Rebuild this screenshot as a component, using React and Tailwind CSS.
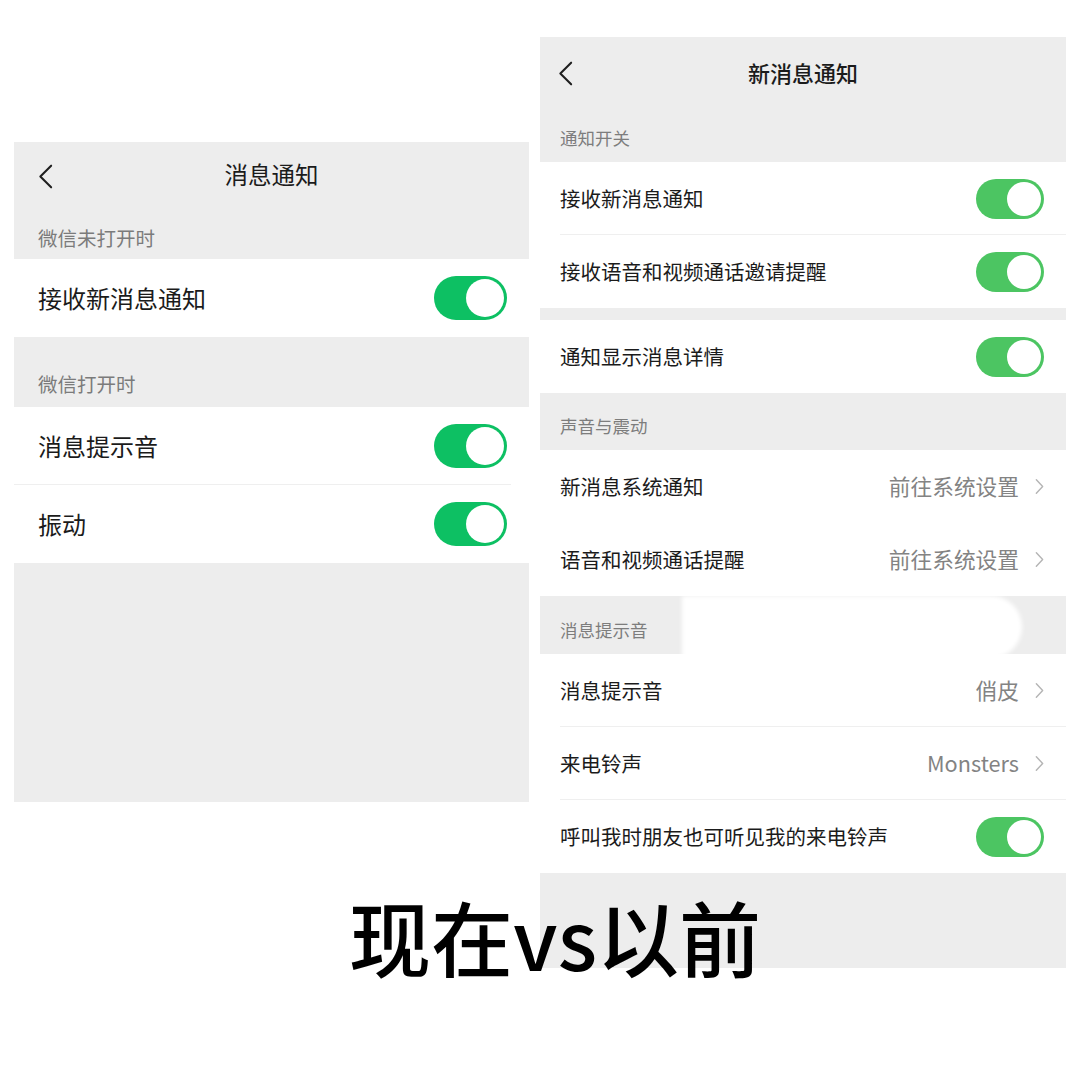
import React from "react";

const FONT = { fontFamily: '"Noto Sans CJK SC", "Noto Sans", sans-serif' };

function BackIcon({ className }) {
    return (
        <svg viewBox="0 0 16 26" className={className} fill="none">
            <polyline points="14,1.5 2.5,13 14,24.5" stroke="#1f1f1f" strokeWidth="2.2" strokeLinecap="round" strokeLinejoin="round" />
        </svg>
    );
}

function RowChevron() {
    return (
        <svg viewBox="0 0 10 18" className="w-[9px] h-[17px] ml-[16px]" fill="none">
            <polyline points="1.5,1.5 8.5,9 1.5,16.5" stroke="#b5b5b5" strokeWidth="1.6" strokeLinecap="round" strokeLinejoin="round" />
        </svg>
    );
}

function Toggle({ big }) {
    // left screenshot is the newer, brighter green
    if (big) {
        return (
            <div className="w-[73px] h-[44px] rounded-full bg-[#0dc063] flex items-center justify-end p-[3px]">
                <div className="w-[38px] h-[38px] rounded-full bg-white" />
            </div>
        );
    }
    return (
        <div className="w-[68px] h-[40px] rounded-full bg-[#4cc562] flex items-center justify-end p-[3px]">
            <div className="w-[34px] h-[34px] rounded-full bg-white" />
        </div>
    );
}

// ── Left: 现在 ─────────────────────────────────────────────
function LeftRow({ label, divider }) {
    return (
        <div className="relative h-[78px] bg-white flex items-center pl-[24px] pr-[22px]">
            <span className="text-[24px] text-[#1b1b1b]">{label}</span>
            <div className="ml-auto"><Toggle big /></div>
            {divider && <div className="absolute left-0 right-[18px] bottom-0 h-px bg-[#efefef]" />}
        </div>
    );
}

function LeftPanel() {
    return (
        <div className="w-[515px] h-[660px] mt-[142px] ml-[14px] bg-[#ededed] flex flex-col">
            <div className="relative h-[73px] flex items-center justify-center pb-[7px]">
                <BackIcon className="absolute left-[24px] top-[22px] w-[15px] h-[25px]" />
                <span className="text-[23.5px] text-[#1b1b1b]">消息通知</span>
            </div>
            <div className="h-[44px] flex items-center pl-[24px] pt-[1px]">
                <span className="text-[19.5px] text-[#7b7b7b]">微信未打开时</span>
            </div>
            <LeftRow label="接收新消息通知" />
            <div className="h-[70px] flex items-end pl-[24px] pb-[9px]">
                <span className="text-[19.5px] text-[#7b7b7b]">微信打开时</span>
            </div>
            <LeftRow label="消息提示音" divider />
            <LeftRow label="振动" />
            <div className="flex-1" />
        </div>
    );
}

// ── Right: 以前 ─────────────────────────────────────────────
function RightRow({ label, value, toggle, divider }) {
    return (
        <div className="relative h-[73px] bg-white flex items-center pl-[20px] pr-[22px]">
            <span className="text-[20.5px] text-[#1b1b1b]">{label}</span>
            <div className="ml-auto flex items-center">
                {toggle ? (
                    <Toggle />
                ) : (
                    <>
                        <span className="text-[21.7px] text-[#838383]">{value}</span>
                        <RowChevron />
                    </>
                )}
            </div>
            {divider && <div className="absolute left-[20px] right-0 bottom-0 h-px bg-[#efefef]" />}
        </div>
    );
}

function SectionLabel({ text, h, children }) {
    return (
        <div className={`relative flex items-end pl-[20px] pb-[11px] ${h}`}>
            {children}
            <span className="relative text-[17.5px] text-[#7d7d7d]">{text}</span>
        </div>
    );
}

function RightPanel() {
    return (
        <div className="w-[526px] h-[931px] mt-[37px] ml-[11px] bg-[#ededed] flex flex-col">
            <div className="relative h-[76px] flex items-center justify-center pb-[6px]">
                <BackIcon className="absolute left-[18px] top-[24px] w-[15px] h-[25px]" />
                <span className="text-[22px] font-medium text-[#1b1b1b]">新消息通知</span>
            </div>
            <SectionLabel text="通知开关" h="h-[49px]" />
            <RightRow label="接收新消息通知" toggle divider />
            <RightRow label="接收语音和视频通话邀请提醒" toggle />
            <div className="h-[12px]" />
            <RightRow label="通知显示消息详情" toggle />
            <SectionLabel text="声音与震动" h="h-[57px]" />
            <RightRow label="新消息系统通知" value="前往系统设置" />
            <RightRow label="语音和视频通话提醒" value="前往系统设置" />
            <SectionLabel text="消息提示音" h="h-[58px]">
                {/* blurred-out patch in the screenshot */}
                <div className="absolute left-[142px] right-[44px] top-0 bottom-[-4px] bg-white rounded-r-full blur-[2px]" />
            </SectionLabel>
            <RightRow label="消息提示音" value="俏皮" divider />
            <RightRow label="来电铃声" value="Monsters" divider />
            <RightRow label="呼叫我时朋友也可听见我的来电铃声" toggle />
            <div className="flex-1" />
        </div>
    );
}

export default function App() {
    return (
        <div className="relative w-[1080px] h-[1080px] bg-white overflow-hidden" style={FONT}>
            <div className="flex items-start">
                <LeftPanel />
                <RightPanel />
            </div>
            <div className="absolute left-[349px] top-[895px] text-[82px] leading-none font-medium text-black">
                现在vs以前
            </div>
        </div>
    );
}
